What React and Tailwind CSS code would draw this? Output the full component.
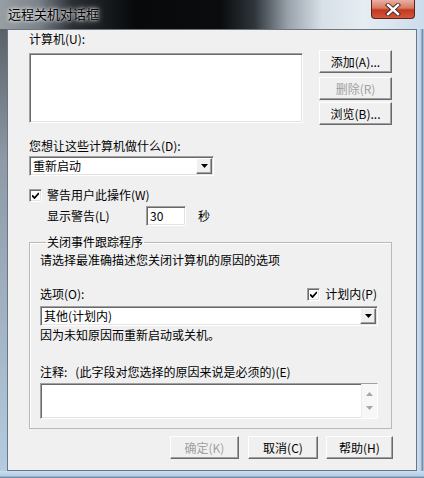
import React from "react";

const FONT = "font-['Noto_Sans_CJK_SC','Noto_Sans',sans-serif]";

function Btn({ children, disabled, className = "" }) {
  return (
    <div className={`h-[23px] flex items-center justify-center bg-[#f0f0f0] border border-t-white border-l-white border-r-[#696969] border-b-[#696969] shadow-[inset_-1px_-1px_0_#a0a0a0] text-[12px] leading-[14px] ${disabled ? "text-[#a0a0a0]" : "text-black"} ${className}`}>
      {children}
    </div>
  );
}

function Sunken({ className = "", children }) {
  return (
    <div className={`bg-white border border-t-[#a0a0a0] border-l-[#a0a0a0] border-b-white border-r-white shadow-[inset_1px_1px_0_#696969,inset_-1px_-1px_0_#e3e3e3] ${className}`}>
      {children}
    </div>
  );
}

function DropArrow() {
  return (
    <div className="w-[16px] h-[16px] flex items-center justify-center bg-[#f0f0f0] border border-t-white border-l-white border-r-[#696969] border-b-[#696969] shadow-[inset_-1px_-1px_0_#a0a0a0]">
      <svg width="7" height="4" viewBox="0 0 7 4"><path d="M0 0h7L3.5 4z" fill="#000" /></svg>
    </div>
  );
}

function Combo({ value, className = "" }) {
  return (
    <Sunken className={`flex items-center justify-between pl-[3px] pr-[1px] ${className}`}>
      <span className="text-[12px] leading-[14px]">{value}</span>
      <DropArrow />
    </Sunken>
  );
}

function Check() {
  return (
    <div className="w-[13px] h-[13px] bg-white border border-t-[#a0a0a0] border-l-[#a0a0a0] border-b-white border-r-white shadow-[inset_1px_1px_0_#696969,inset_-1px_-1px_0_#e3e3e3] flex items-center justify-center">
      <svg width="7" height="7" viewBox="0 0 7 7"><path d="M0 3.5l2.5 2.5L7 1" stroke="#000" strokeWidth="1.8" fill="none" /></svg>
    </div>
  );
}

function Label({ children, className = "" }) {
  return <div className={`text-[12px] leading-[14px] h-[14px] whitespace-nowrap ${className}`}>{children}</div>;
}

export default function App() {
  return (
    <div className={`w-[424px] h-[478px] flex flex-col overflow-hidden bg-[#c4d8ec] ${FONT}`}>
      {/* title bar */}
      <div className="h-[29px] flex justify-between items-start bg-[linear-gradient(90deg,#979ea4_0%,#7b8288_9%,#2a2f34_17%,#07090b_32%,#0a0c0e_52%,#2f353b_60%,#9aa3ab_68%,#d8e0e7_76%,#e6edf3_86%,#cbdcec_100%)]">
        <div className="pl-[8px] pt-[7px] text-[13px] leading-[14px] text-black [text-shadow:0_0_6px_#fff,0_0_3px_#fff]">远程关机对话框</div>
        <div className="mr-[9px] w-[44px] h-[19px] rounded-b-[4px] border border-t-0 border-[#5c231b] bg-[linear-gradient(180deg,#e8b0a4_0%,#d9785f_45%,#c2391f_55%,#d4563a_100%)] flex items-center justify-center">
          <svg width="16" height="13" viewBox="0 0 16 13">
            <path d="M3 2l10 9M13 2L3 11" stroke="#3b2320" strokeWidth="4.2" strokeLinecap="square" />
            <path d="M3 2l10 9M13 2L3 11" stroke="#fff" strokeWidth="2.4" strokeLinecap="square" />
          </svg>
        </div>
      </div>

      <div className="flex flex-1">
        <div className="w-[7px] bg-[linear-gradient(180deg,#5a6168_0%,#8e9aa6_30%,#b4cbe0_100%)]" />
        <div className="flex-1 border border-[#6b7682] bg-[#f0f0f0] flex flex-col pl-[21px]">
          <Label className="mt-[2px]">计算机(U):</Label>

          <div className="flex mt-[4px]">
            <Sunken className="w-[274px] h-[70px] mt-[3px]" />
            <div className="ml-[16px] w-[73px] flex flex-col">
              <Btn>添加(A)...</Btn>
              <Btn disabled className="mt-[4px]">删除(R)</Btn>
              <Btn className="mt-[2px]">浏览(B)...</Btn>
            </div>
          </div>

          <Label className="mt-[14px]">您想让这些计算机做什么(D):</Label>
          <Combo value="重新启动" className="mt-[3px] w-[185px] h-[20px]" />

          <div className="flex items-center mt-[12px] h-[14px]">
            <Check />
            <Label className="ml-[5px]">警告用户此操作(W)</Label>
          </div>

          <div className="flex items-center mt-[4px] pl-[18px]">
            <Label className="w-[99px]">显示警告(L)</Label>
            <Sunken className="w-[40px] h-[20px] flex items-center pl-[3px]">
              <span className="text-[12px] leading-[14px]">30</span>
            </Sunken>
            <Label className="ml-[12px]">秒</Label>
          </div>

          <fieldset className="mt-[9px] w-[363px] border border-[#b9b9b9] pl-[10px] pr-[13px] pb-[9px] shadow-[inset_1px_1px_0_#fff]">
            <legend className="ml-[6px] px-[1px] text-[12px] leading-[14px]">关闭事件跟踪程序</legend>
            <Label className="mt-[4px]">请选择最准确描述您关闭计算机的原因的选项</Label>
            <div className="flex justify-between items-center mt-[20px] h-[14px]">
              <Label>选项(O):</Label>
              <div className="flex items-center mr-[1px]">
                <Check />
                <Label className="ml-[5px]">计划内(P)</Label>
              </div>
            </div>
            <Combo value="其他(计划内)" className="mt-[5px] h-[20px]" />
            <Label className="mt-[2px]">因为未知原因而重新启动或关机。</Label>
            <Label className="mt-[23px] flex">
              <span>注释:</span>
              <span className="ml-[8px]">(此字段对您选择的原因来说是必须的)(E)</span>
            </Label>
            <Sunken className="mt-[4px] h-[36px] flex justify-end">
              <div className="w-[16px] bg-[#f7f7f7] border-l border-[#ececec] flex flex-col items-center justify-between py-[8px]">
                <svg width="7" height="4" viewBox="0 0 7 4"><path d="M0 4h7L3.5 0z" fill="#a6a6a6" /></svg>
                <svg width="7" height="4" viewBox="0 0 7 4"><path d="M0 0h7L3.5 4z" fill="#a6a6a6" /></svg>
              </div>
            </Sunken>
          </fieldset>

          <div className="flex justify-end mt-[7px] pr-[23px]">
            <Btn disabled className="w-[69px]">确定(K)</Btn>
            <Btn className="w-[70px] ml-[9px]">取消(C)</Btn>
            <Btn className="w-[67px] ml-[8px]">帮助(H)</Btn>
          </div>
        </div>
        <div className="w-[7px] bg-[linear-gradient(90deg,#cfe0ef_0%,#b9d2ea_50%,#6d8aa6_80%,#c6dbee_100%)]" />
      </div>
      <div className="h-[7px] bg-[linear-gradient(180deg,#cadff1_0%,#b1cce6_70%,#5e7890_100%)]" />
    </div>
  );
}
